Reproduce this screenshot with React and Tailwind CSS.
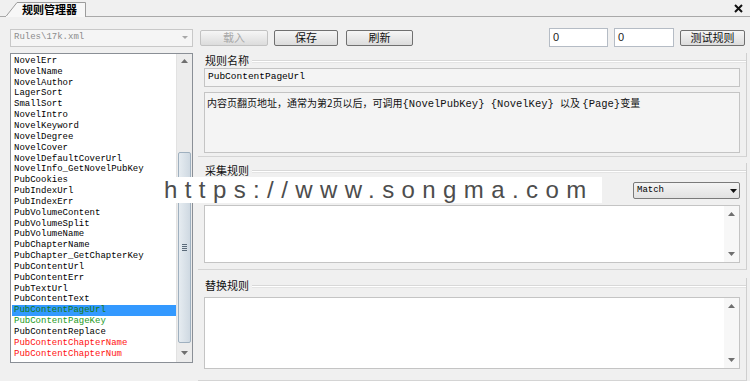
const items = [
  ["NovelErr"], ["NovelName"], ["NovelAuthor"], ["LagerSort"], ["SmallSort"], ["NovelIntro"],
  ["NovelKeyword"], ["NovelDegree"], ["NovelCover"], ["NovelDefaultCoverUrl"], ["NovelInfo_GetNovelPubKey"],
  ["PubCookies"], ["PubIndexUrl"], ["PubIndexErr"], ["PubVolumeContent"], ["PubVolumeSplit"], ["PubVolumeName"],
  ["PubChapterName"], ["PubChapter_GetChapterKey"], ["PubContentUrl"], ["PubContentErr"], ["PubTextUrl"],
  ["PubContentText"], ["PubContentPageUrl", "sel"], ["PubContentPageKey", "green"], ["PubContentReplace"],
  ["PubContentChapterName", "red"], ["PubContentChapterNum", "red"],
];

const mono = { fontFamily: '"Liberation Mono", "DejaVu Sans Mono", monospace' };
const cjk = { fontFamily: '"Noto Sans CJK SC", "Liberation Sans", sans-serif' };

function Up() {
  return (
    <svg width="7" height="4" viewBox="0 0 7 4"><polygon points="0,4 3.5,0 7,4" fill="#6f6f6f" /></svg>
  );
}
function Down() {
  return (
    <svg width="7" height="4" viewBox="0 0 7 4"><polygon points="0,0 3.5,4 7,0" fill="#6f6f6f" /></svg>
  );
}

function Btn({ children, w, disabled }) {
  return (
    <div
      className={`h-[16px] ${w} flex items-center justify-center rounded-[2px] border text-[11px] leading-none bg-gradient-to-b from-[#f6f6f6] to-[#dcdcdc] ${disabled ? "border-[#c2c2c2] text-[#a8a8a8]" : "border-[#707070] text-[#111]"}`}
      style={cjk}
    >
      {children}
    </div>
  );
}

function TextArea({ h }) {
  return (
    <div className={`mx-[6px] ${h} border border-[#c4c4c4] bg-white flex`}>
      <div className="flex-1" />
      <div className="w-[15px] bg-[#f7f7f7] flex flex-col items-center justify-between py-[6px]">
        <Up />
        <Down />
      </div>
    </div>
  );
}

function Title({ children }) {
  return (
    <div className="h-[14px] flex items-center pl-[7px]">
      <span className="text-[11px] leading-none text-[#111] pr-[3px]" style={cjk}>{children}</span>
      <div className="flex-1 h-[3px] border-t border-b border-t-[#d8d8d8] border-b-[#e4e4e4] bg-white mt-[2px]" />
    </div>
  );
}

export default function App() {
  return (
    <div className="w-[750px] h-[381px] bg-[#f0f0f0] relative overflow-hidden" style={cjk}>
      {/* tab strip */}
      <div className="h-[17px] flex items-end border-b border-[#a9a9a9]">
        <div className="ml-[5px] relative w-[81px] h-[15px] mb-[-1px]">
          <svg className="absolute inset-0" width="81" height="15" viewBox="0 0 81 15">
            <polygon points="0.5,15 12,0.5 80.5,0.5 80.5,15" fill="#f7f7f7" stroke="#9c9c9c" />
            <line x1="1" y1="14.5" x2="80" y2="14.5" stroke="#f7f7f7" />
          </svg>
          <span className="absolute left-[17px] top-[1px] text-[11px] leading-[13px] font-bold text-black" style={cjk}>规则管理器</span>
        </div>
        <div className="ml-auto mr-[6px] mb-[2px] w-[12px] h-[12px] flex items-center justify-center">
          <svg width="9" height="9" viewBox="0 0 9 9">
            <path d="M1 1 L8 8 M8 1 L1 8" stroke="#111" strokeWidth="2" />
          </svg>
        </div>
      </div>

      {/* top row */}
      <div className="mt-[11px] h-[19px] flex items-center">
        <div className="ml-[10px] w-[183px] h-[18px] border border-[#c8c8c8] bg-[#f5f5f5] flex items-center">
          <span className="pl-[3px] text-[9px] text-[#8c8c8c] flex-1" style={mono}>Rules\17k.xml</span>
          <div className="w-[14px] flex justify-center"><svg width="6" height="3"><polygon points="0,0 3,3 6,0" fill="#a8a8a8" /></svg></div>
        </div>
        <div className="ml-[7px]"><Btn w="w-[68px]" disabled>载入</Btn></div>
        <div className="ml-[6px]"><Btn w="w-[64px]">保存</Btn></div>
        <div className="ml-[8px]"><Btn w="w-[67px]">刷新</Btn></div>
        <div className="ml-[136px] w-[59px] h-[19px] bg-white border border-[#b5bcc5] flex items-center pl-[3px] text-[11px] text-[#222]" style={{ fontFamily: '"Liberation Sans", sans-serif' }}>0</div>
        <div className="ml-[6px] w-[60px] h-[19px] bg-white border border-[#b5bcc5] flex items-center pl-[3px] text-[11px] text-[#222]" style={{ fontFamily: '"Liberation Sans", sans-serif' }}>0</div>
        <div className="ml-[6px]"><Btn w="w-[65px]">测试规则</Btn></div>
      </div>

      {/* body */}
      <div className="mt-[6px] flex">
        {/* list */}
        <div className="ml-[10px] w-[183px] h-[310px] border border-[#8a8f96] bg-white flex">
          <div className="flex-1 pt-[2px] pl-[1px]">
            {items.map(([name, kind]) => (
              <div
                key={name}
                className={`h-[10.85px] flex items-center pl-[2px] text-[9px] leading-none ${kind === "sel" ? "bg-[#3399ff] text-[#137a13]" : kind === "green" ? "text-[#1c9a1c]" : kind === "red" ? "text-[#ff1010]" : "text-black"}`}
                style={mono}
              >
                {name}
              </div>
            ))}
          </div>
          <div className="w-[16px] bg-[#ececec] flex flex-col items-center border-l border-[#e2e2e2]">
            <div className="h-[14px] w-full flex items-center justify-center"><Up /></div>
            <div className="mt-[84px] w-[13px] h-[191px] rounded-[2px] border border-[#9fb0bf] bg-gradient-to-r from-[#e6ecf1] to-[#cfd9e2] flex flex-col items-center justify-center gap-[1px]">
              <div className="w-[5px] h-[1px] bg-[#5b6b7a]" />
              <div className="w-[5px] h-[1px] bg-[#5b6b7a]" />
              <div className="w-[5px] h-[1px] bg-[#5b6b7a]" />
              <div className="w-[5px] h-[1px] bg-[#5b6b7a]" />
            </div>
            <div className="flex-1 w-full flex items-center justify-center"><Down /></div>
          </div>
        </div>

        {/* right panel */}
        <div className="ml-[5px] w-[549px] flex flex-col">
          {/* section 1 */}
          <div className="h-[104px] border-r border-[#cfcfcf] border-b border-b-[#d4d4d4] flex flex-col">
            <Title>规则名称</Title>
            <div className="mt-[1px] mx-[6px] h-[19px] border border-[#c4c4c4] bg-[#f4f4f4] flex items-center pl-[3px] text-[9.5px] text-black" style={mono}>
              PubContentPageUrl
            </div>
            <div className="mt-[5px] mx-[6px] h-[61px] border border-[#c4c4c4] bg-[#f4f4f4] pl-[2px] pt-[3px] text-[10px] leading-[14px] text-[#111] whitespace-nowrap">
              <span style={cjk}>内容页翻页地址，通常为第2页以后，可调用</span>
              <span style={mono} className="text-[10.5px]">{"{NovelPubKey} {NovelKey} "}</span>
              <span style={cjk}>以及 </span>
              <span style={mono} className="text-[10.5px]">{"{Page}"}</span>
              <span style={cjk}>变量</span>
            </div>
          </div>

          {/* section 2 */}
          <div className="mt-[6px] h-[107px] border-r border-[#cfcfcf] border-b border-b-[#d4d4d4] flex flex-col">
            <Title>采集规则</Title>
            <div className="mt-[5px] h-[17px] flex justify-end pr-[6px]">
              <div className="w-[107px] h-[17px] border border-[#7a7a7a] rounded-[2px] bg-gradient-to-b from-[#f4f4f4] to-[#e2e2e2] flex items-center">
                <span className="flex-1 pl-[3px] text-[9px] text-black" style={mono}>Match</span>
                <div className="w-[12px] flex justify-center"><svg width="7" height="4"><polygon points="0,0 3.5,4 7,0" fill="#111" /></svg></div>
              </div>
            </div>
            <div className="mt-[6px]"><TextArea h="h-[58px]" /></div>
          </div>

          {/* section 3 */}
          <div className="mt-[8px] h-[103px] border-r border-[#cfcfcf] border-b border-b-[#d4d4d4] flex flex-col">
            <Title>替换规则</Title>
            <div className="mt-[5px]"><TextArea h="h-[72px]" /></div>
          </div>
        </div>
      </div>

      {/* watermark overlay */}
      <div className="absolute left-[150px] top-[177px] w-[452px] h-[26px] bg-white flex items-center pl-[14px]">
        <span className="text-[24px] leading-none tracking-[7.4px] text-[#4d4d4d]" style={{ fontFamily: '"Liberation Sans", sans-serif' }}>
          https://www.songma.com
        </span>
      </div>
    </div>
  );
}
